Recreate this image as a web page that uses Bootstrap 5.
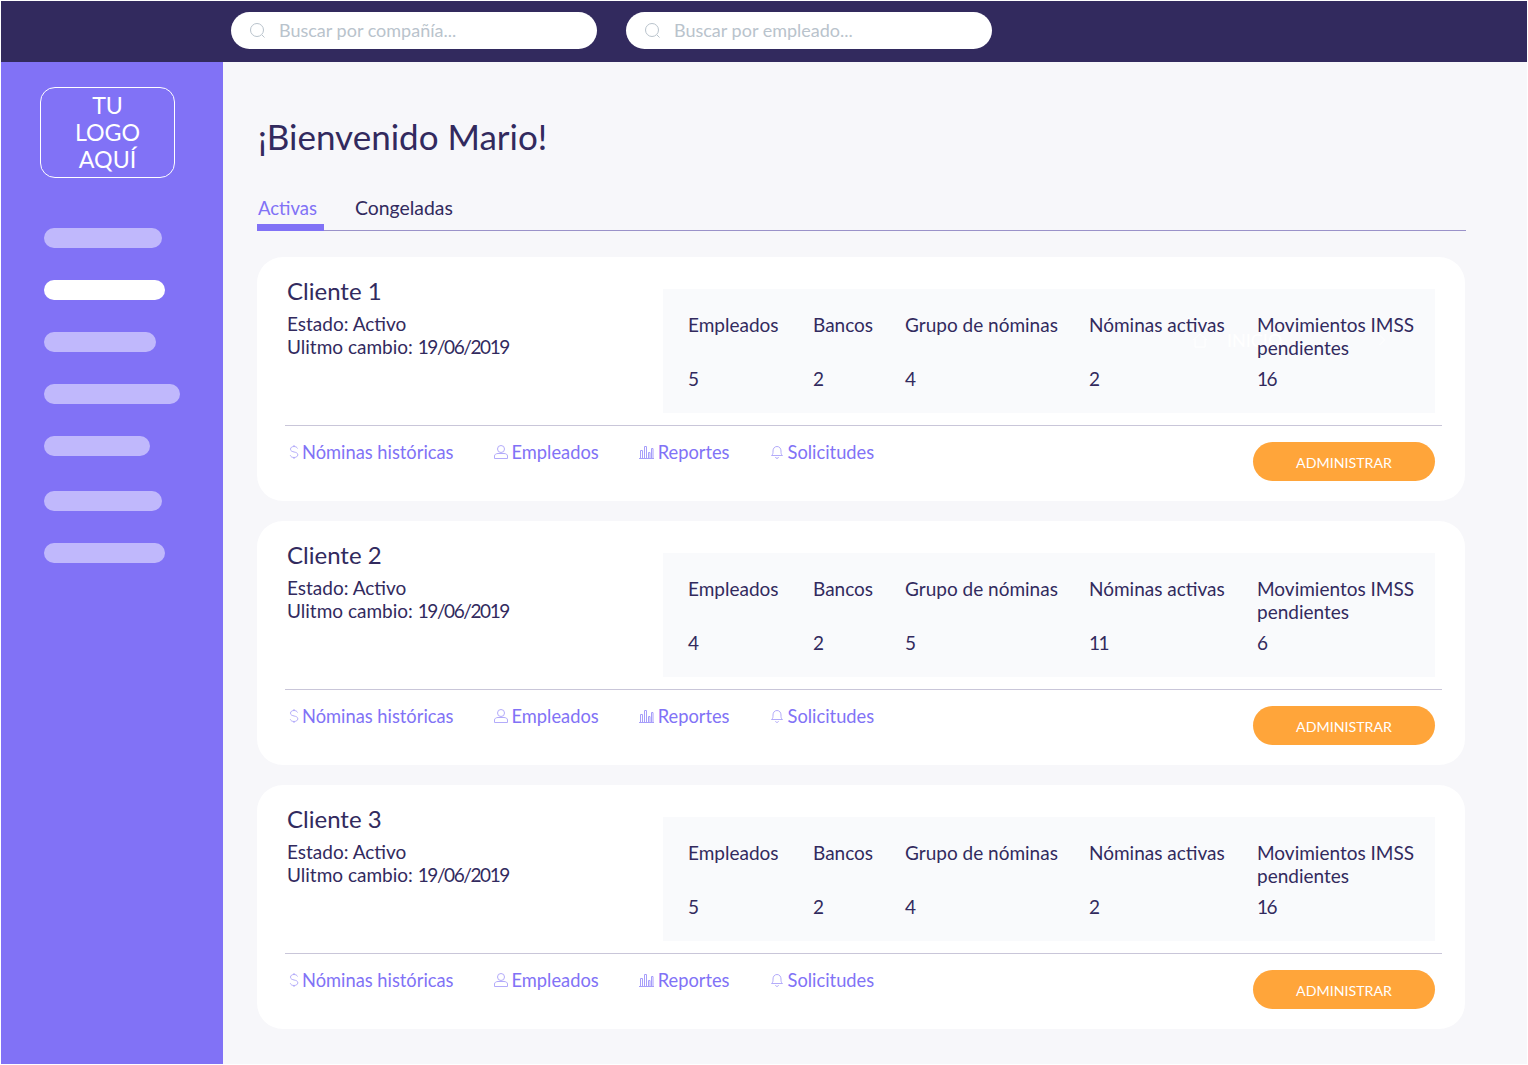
<!doctype html>
<html lang="es"><head><meta charset="utf-8"><title>Inicio</title>
<link href="https://cdn.jsdelivr.net/npm/bootstrap@5.3.0/dist/css/bootstrap.min.css" rel="stylesheet">
<style>
html,body{height:100%;margin:0;background:#fff}
body{font-family:"Lato","Liberation Sans",sans-serif;color:#322a5e;padding:1px;overflow:hidden}
.frame{width:1526px;height:1063px;display:flex;flex-direction:column;background:#f7f7fa}
.topbar{height:61px;background:#322a5e;padding:11px 0 0 230px;gap:29px;flex:none}
.searchbox{width:366px;height:37px;background:#fff;border-radius:19px;padding-left:18px;gap:12px}
.searchbox input{border:0;outline:0;background:transparent;font-size:18px;width:300px;padding:0;color:#322a5e;font-family:inherit}
.searchbox input::placeholder{color:#b9c3cc;opacity:1}
.shell{flex:1;min-height:0}
.side{width:222px;background:#8172f6;padding:25px 0 0 39px;flex:none}
.logobox{width:135px;height:91px;border:1px solid #fff;border-radius:15px;color:#fff;font-size:23.2px;line-height:27px;text-align:center;padding-top:4px;margin-bottom:50px}
.pill{height:20px;border-radius:10px;background:#c0b8fc;margin:0 0 32px 4px}
.pill.on{background:#fff}
.w118{width:118px}.w121{width:121px}.w112{width:112px}.w136{width:136px}.w106{width:106px}
.mt35{margin-top:35px}
.content{padding:52px 0 0 34px;width:1243px}
.hello{font-size:35px;font-weight:400;margin:0 0 38px 1px;line-height:44px;color:#322a5e}
.tabsrow{border-bottom:1px solid #9a92c9;height:35px;margin-bottom:26px;gap:31px}
.tabitem{font-size:19.4px;line-height:24px;padding:0;height:35px;color:#322a5e;text-decoration:none}
.tabitem.on{color:#8172f6;border-bottom:7px solid #8172f6;width:67px;margin-bottom:-1px;padding-left:1px;font-size:18.5px}
.clientcard{background:#fff;border-radius:26px;height:244px;margin-bottom:20px;width:1208px;padding:21px 30px 0 28px;position:relative}
.infobox{width:378px;padding-left:2px}
.clientname{font-size:24px;line-height:26px;font-weight:400;margin:0 0 8px}
.infoline{font-size:19px;line-height:23px}
.tightnum{letter-spacing:-1.400px}
.stats{width:772px;height:124px;background:#f9fafc;margin-top:11px;padding:24px 0 0 25px;display:grid;grid-template-columns:125px 92px 184px 168px 1fr;grid-template-rows:54px 23px;font-size:19px;line-height:23px}
.stats>div{position:relative;z-index:1}
.rule{height:1px;background:#c9c6d9;margin:12px -7px 0 0;width:1157px}
.footrow{padding:6px 0 0 4px}
.linkset{gap:40px}
.cardlink{color:#8172f6;font-size:18.3px;line-height:40px;height:40px;text-decoration:none;gap:3px}
.cardlink svg{flex:none}
.cardlink.wider{gap:4px}
.adminbtn{width:182px;height:39px;background:#ffa53a;border:0;border-radius:20px;color:#fff;font-size:14.2px;padding:2px 0 0;margin-top:10px}
.adminbtn:hover{background:#ffa53a;color:#fff}
.ghost{position:absolute;left:935px;top:71px;color:#fff;font-size:18px;line-height:24px;gap:19px}
.ghost .chev{margin-left:77px}
</style></head><body>
<div class="frame">
<div class="topbar d-flex">
 <label class="searchbox d-flex align-items-center"><svg width="18" height="18" viewBox="0 0 18 18" fill="none" stroke="#b9c3cc" stroke-width="1"><circle cx="8" cy="8" r="6.5"/><path d="M13 13l2.5 2.500"/></svg><input type="text" placeholder="Buscar por compañía..."></label>
 <label class="searchbox d-flex align-items-center"><svg width="18" height="18" viewBox="0 0 18 18" fill="none" stroke="#b9c3cc" stroke-width="1"><circle cx="8" cy="8" r="6.5"/><path d="M13 13l2.5 2.500"/></svg><input type="text" placeholder="Buscar por empleado..."></label>
</div>
<div class="shell d-flex">
 <aside class="side">
  <div class="logobox">TU<br>LOGO<br>AQUÍ</div>
  <div class="pill w118"></div><div class="pill on w121"></div><div class="pill w112"></div><div class="pill w136"></div><div class="pill w106"></div><div class="pill w118 mt35"></div><div class="pill w121"></div>
 </aside>
 <main class="content">
  <h1 class="hello">¡Bienvenido Mario!</h1>
  <div class="tabsrow d-flex"><a class="tabitem on" href="#">Activas</a><a class="tabitem" href="#">Congeladas</a></div>

  <section class="clientcard">
   <div class="d-flex"><div class="infobox"><h2 class="clientname">Cliente 1</h2><div class="infoline">Estado: Activo</div><div class="infoline">Ulitmo cambio: <span class="tightnum">19/06/2019</span></div></div>
    <div class="stats"><div>Empleados</div><div>Bancos</div><div>Grupo de nóminas</div><div>Nóminas activas</div><div>Movimientos IMSS pendientes</div><div>5</div><div>2</div><div>4</div><div>2</div><div class="tightnum">16</div></div></div>
   <div class="ghost d-flex align-items-center"><svg width="16" height="16" viewBox="0 0 16 16" fill="none" stroke="#fff" stroke-width="1"><path d="M1 8l7-6 7 6M3 7v8h10V7"/></svg><span>INICIO</span><svg class="chev" width="8" height="12" viewBox="0 0 8 12" fill="none" stroke="#fff" stroke-width="1"><path d="M1.500 1l5 5-5 5"/></svg></div>
   <div class="rule"></div>
   <div class="footrow d-flex justify-content-between">
    <div class="linkset d-flex">
     <a class="cardlink d-flex align-items-center" href="#"><svg width="10" height="16" viewBox="0 0 10 16" fill="none" stroke="#b3abfa" stroke-width="1"><path d="M8.500 4.500C8 3.200 6.700 2.500 5 2.500 3 2.500 1.500 3.500 1.500 5.200 1.500 9 8.800 7 8.800 10.800 8.800 12.500 7 13.500 5 13.500 3 13.500 1.800 12.700 1.300 11.300M5 1v1.500M5 13.500V15"/></svg>Nóminas históricas</a>
     <a class="cardlink d-flex align-items-center" href="#"><svg width="15" height="16" viewBox="0 0 15 16" fill="none" stroke="#b3abfa" stroke-width="1"><circle cx="7" cy="5" r="3.500"/><path d="M.5 14.500v-2.500c0-1.500 1.500-2.500 3.500-2.500h6c2 0 3.500 1 3.500 2.500v2.500z"/></svg>Empleados</a>
     <a class="cardlink wider d-flex align-items-center" href="#"><svg width="15" height="16" viewBox="0 0 15 16" fill="none" stroke="#a79efa" stroke-width="1"><path d="M0 14.500h15M1.500 14V6.500h2V14M5.500 14V2.500h2V14M9.500 14V8.500H11V14M12.500 14V4.500H14V14"/></svg>Reportes</a>
     <a class="cardlink wider d-flex align-items-center" href="#"><svg width="14" height="16" viewBox="0 0 14 16" fill="none" stroke="#b3abfa" stroke-width="1"><path d="M1.500 11.500c1.500-1 1.500-2.500 1.500-4.500 0-2.500 1.500-4.500 4-4.500s4 2 4 4.500c0 2 0 3.500 1.500 4.500zM5.500 13c.3 1 .8 1.500 1.500 1.500s1.200-.5 1.500-1.500"/></svg>Solicitudes</a>
    </div>
    <button class="btn adminbtn" type="button">ADMINISTRAR</button>
   </div>
  </section>

  <section class="clientcard">
   <div class="d-flex"><div class="infobox"><h2 class="clientname">Cliente 2</h2><div class="infoline">Estado: Activo</div><div class="infoline">Ulitmo cambio: <span class="tightnum">19/06/2019</span></div></div>
    <div class="stats"><div>Empleados</div><div>Bancos</div><div>Grupo de nóminas</div><div>Nóminas activas</div><div>Movimientos IMSS pendientes</div><div>4</div><div>2</div><div>5</div><div class="tightnum">11</div><div>6</div></div></div>
   <div class="rule"></div>
   <div class="footrow d-flex justify-content-between">
    <div class="linkset d-flex">
     <a class="cardlink d-flex align-items-center" href="#"><svg width="10" height="16" viewBox="0 0 10 16" fill="none" stroke="#b3abfa" stroke-width="1"><path d="M8.500 4.500C8 3.200 6.700 2.500 5 2.500 3 2.500 1.500 3.500 1.500 5.200 1.500 9 8.800 7 8.800 10.800 8.800 12.500 7 13.500 5 13.500 3 13.500 1.800 12.700 1.300 11.300M5 1v1.500M5 13.500V15"/></svg>Nóminas históricas</a>
     <a class="cardlink d-flex align-items-center" href="#"><svg width="15" height="16" viewBox="0 0 15 16" fill="none" stroke="#b3abfa" stroke-width="1"><circle cx="7" cy="5" r="3.500"/><path d="M.5 14.500v-2.500c0-1.500 1.500-2.500 3.500-2.500h6c2 0 3.500 1 3.500 2.500v2.500z"/></svg>Empleados</a>
     <a class="cardlink wider d-flex align-items-center" href="#"><svg width="15" height="16" viewBox="0 0 15 16" fill="none" stroke="#a79efa" stroke-width="1"><path d="M0 14.500h15M1.500 14V6.500h2V14M5.500 14V2.500h2V14M9.500 14V8.500H11V14M12.500 14V4.500H14V14"/></svg>Reportes</a>
     <a class="cardlink wider d-flex align-items-center" href="#"><svg width="14" height="16" viewBox="0 0 14 16" fill="none" stroke="#b3abfa" stroke-width="1"><path d="M1.500 11.500c1.500-1 1.500-2.500 1.500-4.500 0-2.500 1.500-4.500 4-4.500s4 2 4 4.500c0 2 0 3.500 1.500 4.500zM5.500 13c.3 1 .8 1.500 1.500 1.500s1.200-.5 1.500-1.500"/></svg>Solicitudes</a>
    </div>
    <button class="btn adminbtn" type="button">ADMINISTRAR</button>
   </div>
  </section>

  <section class="clientcard">
   <div class="d-flex"><div class="infobox"><h2 class="clientname">Cliente 3</h2><div class="infoline">Estado: Activo</div><div class="infoline">Ulitmo cambio: <span class="tightnum">19/06/2019</span></div></div>
    <div class="stats"><div>Empleados</div><div>Bancos</div><div>Grupo de nóminas</div><div>Nóminas activas</div><div>Movimientos IMSS pendientes</div><div>5</div><div>2</div><div>4</div><div>2</div><div class="tightnum">16</div></div></div>
   <div class="rule"></div>
   <div class="footrow d-flex justify-content-between">
    <div class="linkset d-flex">
     <a class="cardlink d-flex align-items-center" href="#"><svg width="10" height="16" viewBox="0 0 10 16" fill="none" stroke="#b3abfa" stroke-width="1"><path d="M8.500 4.500C8 3.200 6.700 2.500 5 2.500 3 2.500 1.500 3.500 1.500 5.200 1.500 9 8.800 7 8.800 10.800 8.800 12.500 7 13.500 5 13.500 3 13.500 1.800 12.700 1.300 11.300M5 1v1.500M5 13.500V15"/></svg>Nóminas históricas</a>
     <a class="cardlink d-flex align-items-center" href="#"><svg width="15" height="16" viewBox="0 0 15 16" fill="none" stroke="#b3abfa" stroke-width="1"><circle cx="7" cy="5" r="3.500"/><path d="M.5 14.500v-2.500c0-1.500 1.500-2.500 3.500-2.500h6c2 0 3.500 1 3.500 2.500v2.500z"/></svg>Empleados</a>
     <a class="cardlink wider d-flex align-items-center" href="#"><svg width="15" height="16" viewBox="0 0 15 16" fill="none" stroke="#a79efa" stroke-width="1"><path d="M0 14.500h15M1.500 14V6.500h2V14M5.500 14V2.500h2V14M9.500 14V8.500H11V14M12.500 14V4.500H14V14"/></svg>Reportes</a>
     <a class="cardlink wider d-flex align-items-center" href="#"><svg width="14" height="16" viewBox="0 0 14 16" fill="none" stroke="#b3abfa" stroke-width="1"><path d="M1.500 11.500c1.500-1 1.500-2.500 1.500-4.500 0-2.500 1.500-4.500 4-4.500s4 2 4 4.500c0 2 0 3.500 1.500 4.500zM5.500 13c.3 1 .8 1.500 1.500 1.500s1.200-.5 1.500-1.500"/></svg>Solicitudes</a>
    </div>
    <button class="btn adminbtn" type="button">ADMINISTRAR</button>
   </div>
  </section>
 </main>
</div>
</div>
<script src="https://cdn.jsdelivr.net/npm/bootstrap@5.3.0/dist/js/bootstrap.bundle.min.js"></script>
</body></html>
